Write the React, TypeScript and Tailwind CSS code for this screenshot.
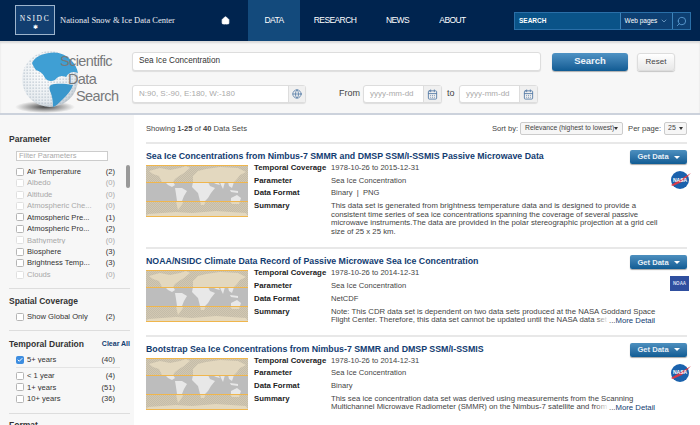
import { ChevronDown, Search, Home, Globe, CalendarDays, Check } from "lucide-react";

const paramFacets = [
  { label: "Air Temperature", count: 2 },
  { label: "Albedo", count: 0 },
  { label: "Altitude", count: 0 },
  { label: "Atmospheric Che...", count: 0 },
  { label: "Atmospheric Pre...", count: 1 },
  { label: "Atmospheric Pro...", count: 2 },
  { label: "Bathymetry", count: 0 },
  { label: "Biosphere", count: 3 },
  { label: "Brightness Temp...", count: 3 },
  { label: "Clouds", count: 0 },
];

const results = [
  {
    title: "Sea Ice Concentrations from Nimbus-7 SMMR and DMSP SSM/I-SSMIS Passive Microwave Data",
    coverage: "1978-10-26 to 2015-12-31",
    format: "Binary  |  PNG",
    summary: [
      "This data set is generated from brightness temperature data and is designed to provide a",
      "consistent time series of sea ice concentrations spanning the coverage of several passive",
      "microwave instruments.The data are provided in the polar stereographic projection at a grid cell",
      "size of 25 x 25 km.",
    ],
    logo: "nasa",
    more: false,
  },
  {
    title: "NOAA/NSIDC Climate Data Record of Passive Microwave Sea Ice Concentration",
    coverage: "1978-10-26 to 2014-12-31",
    format: "NetCDF",
    summary: [
      "Note: This CDR data set is dependent on two data sets produced at the NASA Goddard Space",
      "Flight Center. Therefore, this data set cannot be updated until the NASA data set",
    ],
    logo: "noaa",
    more: true,
  },
  {
    title: "Bootstrap Sea Ice Concentrations from Nimbus-7 SMMR and DMSP SSM/I-SSMIS",
    coverage: "1978-10-26 to 2014-12-31",
    format: "Binary",
    summary: [
      "This sea ice concentration data set was derived using measurements from the Scanning",
      "Multichannel Microwave Radiometer (SMMR) on the Nimbus-7 satellite and from",
    ],
    logo: "nasa",
    more: true,
  },
];

function WorldThumb({ id }: { id: string }) {
  return (
    <svg width="102" height="52" viewBox="0 0 102 52" className="shrink-0">
      <defs>
        <pattern id={id} width="2" height="2" patternUnits="userSpaceOnUse">
          <rect width="2" height="2" fill="#d2c8b2" />
          <rect width="1" height="1" fill="#c4bca9" />
          <rect x="1" y="1" width="1" height="1" fill="#c4bca9" />
        </pattern>
      </defs>
      <rect width="102" height="52" fill="#bdbdbd" />
      <rect width="102" height="17" fill={`url(#${id})`} />
      <rect y="36" width="102" height="16" fill={`url(#${id})`} />
      {/* land inside the tan bands */}
      <g fill="#e3d8bf">
        <path d="M3 6 L14 3 L24 5 L34 3 L40 1 L44 3 L38 8 L33 11 L29 14 L27 17 L16 17 L13 11 L7 9 Z" />
        <path d="M47 17 L47 11 L52 6 L60 4 L74 2 L92 3 L100 7 L94 10 L91 14 L88 17 Z" />
        <path d="M30 36 L38 36 L35 41 L32 45 L31 41 Z" />
        <path d="M54 36 L60 36 L58 40 L55 40 Z" />
        <path d="M84 36 L94 36 L93 39 L86 39 Z" />
        <path d="M2 49 L30 47 L46 48 L70 46 L100 48 L102 51 L0 51 Z" />
      </g>
      {/* land inside the grey band */}
      <g fill="#e8e8e8">
        <path d="M19 17 L27 17 L29 20 L26 22 L22 20 Z" />
        <path d="M29 23 L36 23 L41 26 L38 31 L36 36 L31 36 L30 29 Z" />
        <path d="M47 17 L62 17 L64 21 L69 23 L65 28 L62 33 L59 36 L54 36 L52 28 L49 25 L46 22 Z" />
        <path d="M66 17 L72 17 L74 20 L70 19 Z" />
        <path d="M74 17 L79 17 L77 24 L75 20 Z" />
        <path d="M82 17 L88 17 L86 23 L83 21 Z" />
        <path d="M84 25 L92 26 L92 28 L85 27 Z" />
        <path d="M85 33 L91 30 L95 33 L94 36 L85 36 Z" />
      </g>
      <rect y="0" width="102" height="1" fill="#f0b64c" />
      <rect y="17" width="102" height="1" fill="#f0b64c" />
      <rect y="36" width="102" height="1" fill="#f0b64c" />
      <rect y="51" width="102" height="1" fill="#f0b64c" />
    </svg>
  );
}

function NasaLogo() {
  return (
    <div className="relative flex h-[18px] w-[18px] items-center justify-center rounded-full bg-[#1a62ad]">
      <svg width="20" height="18" viewBox="0 0 20 18" className="absolute left-0 top-0">
        <path d="M0 14 L20 2 L11 11 L2 15 Z" fill="#d43b4a" />
      </svg>
      <span className="relative text-[5px] font-bold leading-none text-white">NASA</span>
    </div>
  );
}

function GlobeLogo() {
  return (
    <svg width="78" height="74" viewBox="0 0 78 74" className="absolute left-[11px] top-[4px]">
      <defs>
        <radialGradient id="gshade" cx="0.42" cy="0.38" r="0.7">
          <stop offset="0" stopColor="#ffffff" />
          <stop offset="0.75" stopColor="#e6ebef" />
          <stop offset="1" stopColor="#aab5bf" />
        </radialGradient>
        <pattern id="gbits" width="3" height="3" patternUnits="userSpaceOnUse">
          <rect x="0.5" y="0.5" width="1.3" height="1.3" fill="#aab7c3" />
        </pattern>
        <radialGradient id="gfloor" cx="0.5" cy="0.5" r="0.5">
          <stop offset="0" stopColor="#444" />
          <stop offset="1" stopColor="#555" stopOpacity="0" />
        </radialGradient>
      </defs>
      <ellipse cx="34" cy="62" rx="30" ry="6" fill="url(#gfloor)" />
      <circle cx="39" cy="34" r="28" fill="url(#gshade)" />
      <circle cx="39" cy="34" r="28" fill="url(#gbits)" opacity="0.75" />
      <path
        d="M21 18 C24 12 30 9 38 8 C46 6 54 9 60 15 C64 19 66 23 67 28 C62 26 58 27 55 32 C51 30 47 31 44 35 C40 37 36 36 34 33 C32 28 28 26 25 25 C23 23 22 20 21 18 Z"
        fill="#3f9fd4"
      />
      <path
        d="M40 40 C46 38 54 39 62 40 C60 46 56 50 52 54 C48 58 45 61 42 62 C42 56 41 50 39 46 C38 43 38 41 40 40 Z"
        fill="#3a97cc"
      />
    </svg>
  );
}

function Facet({ label, count, checked }: { label: string; count: number; checked?: boolean }) {
  const off = count === 0;
  return (
    <div className={`flex h-[11.45px] items-center pl-4 pr-[15px] text-[7.6px] leading-none ${off ? "text-[#a8a8a8]" : "text-[#333]"}`}>
      <span
        className={`mr-[3px] flex h-[8px] w-[8px] shrink-0 items-center justify-center rounded-[1.5px] border ${
          checked ? "border-[#3d8de0] bg-[#3d8de0]" : off ? "border-[#e0e0e0] bg-white" : "border-[#b5b5b5] bg-white"
        }`}
      >
        {checked && <Check className="h-[6px] w-[6px] text-white" strokeWidth={4} />}
      </span>
      <span className="flex-1 truncate">{label}</span>
      <span>({count})</span>
    </div>
  );
}

function Sidebar() {
  return (
    <aside className="relative w-[134px] shrink-0 overflow-hidden bg-[#f7f7f7] pr-[4px] pt-[19px]">
      <div className="absolute left-[126px] top-[50px] h-[23px] w-[4px] rounded-sm bg-[#999]" />
      <h3 className="mb-[7px] pl-[9px] text-[8.5px] font-bold leading-[10px] text-[#333]">Parameter</h3>
      <div className="mb-[5px] ml-4 flex h-[10px] w-[92px] items-center border border-[#ccc] bg-white px-[2px] text-[7.5px] leading-none text-[#aaa]">
        Filter Parameters
      </div>
      {paramFacets.map((f) => (
        <Facet key={f.label} label={f.label} count={f.count} />
      ))}
      <div className="ml-[9px] mt-[8px] border-t border-[#ddd]" />
      <h3 className="mb-[5px] mt-[7px] pl-[9px] text-[8.5px] font-bold leading-[10px] text-[#333]">Spatial Coverage</h3>
      <Facet label="Show Global Only" count={2} />
      <div className="ml-[9px] mt-[7px] border-t border-[#ddd]" />
      <div className="mb-[5px] mt-[8px] flex items-center justify-between pl-[9px]">
        <h3 className="text-[8.5px] font-bold leading-[10px] text-[#333]">Temporal Duration</h3>
        <span className="text-[7px] font-bold leading-none text-[#123c71]">Clear All</span>
      </div>
      <Facet label="5+ years" count={40} checked />
      <div className="mb-[2px] ml-4 mr-[10px] mt-[2px] border-t border-[#e4e4e4]" />
      <Facet label="< 1 year" count={4} />
      <Facet label="1+ years" count={51} />
      <Facet label="10+ years" count={36} />
      <div className="ml-[9px] mt-[8px] border-t border-[#ddd]" />
      <h3 className="mt-[6px] pl-[9px] text-[8.5px] font-bold leading-[10px] text-[#333]">Format</h3>
    </aside>
  );
}

function ResultRow({ label, children }: { label: string; children: React.ReactNode }) {
  return (
    <div className="flex">
      <span className="w-[77px] shrink-0 text-[7.8px] font-bold text-[#222]">{label}</span>
      <div className="flex-1 text-[#444]">{children}</div>
    </div>
  );
}

function Result({ r, idx }: { r: (typeof results)[number]; idx: number }) {
  return (
    <section className={`relative border-b-2 border-[#e8e8e8] pt-[6px] last:border-b-0 ${r.more ? "pb-[10px]" : "pb-[11px]"}`}>
      <div className="flex h-[15px] items-start justify-between">
        <h2 className="mt-[1px] text-[8.8px] font-bold leading-[11px] text-[#123c71]">{r.title}</h2>
        <button className="flex h-[14px] w-[57px] items-center justify-center gap-[5px] rounded-[2px] bg-gradient-to-b from-[#4d90bf] to-[#0f5c94] text-[7.6px] font-bold leading-none text-[#e6eff6] shadow-[0_1px_1px_rgba(0,0,0,0.35)]">
          Get Data
          <span className="h-0 w-0 border-x-[3px] border-t-[3px] border-x-transparent border-t-white" />
        </button>
      </div>
      <div className="flex gap-[6px]">
        <WorldThumb id={`hatch${idx}`} />
        <div className="-mt-[3px] flex-1 text-[7.6px] leading-[12.7px]">
          <ResultRow label="Temporal Coverage">{r.coverage}</ResultRow>
          <ResultRow label="Parameter">Sea Ice Concentration</ResultRow>
          <ResultRow label="Data Format">
            <span className="whitespace-pre">{r.format}</span>
          </ResultRow>
          <ResultRow label="Summary">
            <div className="mt-[2px] text-[7.75px] leading-[8.6px]">
              {r.summary.map((line) => (
                <div key={line} className="whitespace-nowrap">
                  {line}
                </div>
              ))}
            </div>
          </ResultRow>
        </div>
      </div>
      <div className="absolute -right-[2px] top-[27px]">
        {r.logo === "nasa" ? (
          <NasaLogo />
        ) : (
          <div className="flex h-[15px] w-[19px] items-center justify-center bg-[#2f4f9f] text-[4.5px] font-bold text-[#d5dcf0]">NOAA</div>
        )}
      </div>
      {r.more && (
        <>
          <div className="absolute bottom-[10px] right-[78px] h-[9px] w-[14px] bg-gradient-to-r from-transparent to-white" />
          <div className="absolute bottom-[10px] right-[32px] w-[46px] whitespace-nowrap text-[7.75px] leading-[9px] text-[#444]">
            ...<span className="text-[#123c71]">More Detail</span>
          </div>
        </>
      )}
    </section>
  );
}

function DateField() {
  return (
    <div className="flex h-[18px] w-[79px] items-center rounded-[3px] border border-[#ddd] bg-white shadow-[0_1px_1px_rgba(0,0,0,0.1)]">
      <span className="flex-1 pl-[6px] text-[8px] text-[#aaa]">yyyy-mm-dd</span>
      <span className="flex h-full w-[18px] items-center justify-center border-l border-[#ddd] bg-[#f0f0f0]">
        <CalendarDays className="h-[11px] w-[11px] text-[#5a7fa8]" />
      </span>
    </div>
  );
}

export default function App() {
  return (
    <div className="flex h-[425px] w-[700px] flex-col overflow-hidden bg-white font-['Liberation_Sans',Arial,sans-serif]">
      <header className="flex h-[41px] shrink-0 items-stretch bg-[#00244f] pl-[15px]">
        <div className="relative mt-[5px] flex h-[30px] w-[40px] flex-col items-center justify-center border border-[#9db4cc] bg-[#123e70] text-white">
          <span className="mt-[5px] font-['Liberation_Serif',serif] text-[7.5px] leading-none tracking-[1.6px]">NSIDC</span>
          <span className="mt-[2px] text-[6px] leading-none">✱</span>
        </div>
        <div className="ml-[5px] flex w-[161px] items-center font-['Liberation_Serif',serif] text-[8.5px] text-[#e8edf3]">
          National Snow &amp; Ice Data Center
        </div>
        <div className="flex items-center">
          <Home className="h-[9px] w-[9px] fill-white text-white" />
        </div>
        <nav className="ml-[18px] flex text-[8.5px] tracking-[-0.6px] text-white">
          <a className="flex w-[52px] items-center justify-center bg-[#134a7c]">DATA</a>
          <a className="flex w-[70px] items-center justify-center">RESEARCH</a>
          <a className="flex w-[55px] items-center justify-center">NEWS</a>
          <a className="flex w-[55px] items-center justify-center">ABOUT</a>
        </nav>
        <div className="ml-[34px] mt-[12px] flex h-[18px] w-[177px] border border-[#2a6fa8] bg-[#0a5388] text-white">
          <div className="flex flex-1 items-center pl-1 text-[6.5px] font-bold">SEARCH</div>
          <div className="flex w-[52px] items-center justify-center gap-[3px] border-l border-[#3d84bb] bg-[#0d3f72] text-[6.5px]">
            Web pages <ChevronDown className="h-[8px] w-[8px] text-[#8fbbe0]" />
          </div>
          <div className="flex w-[18px] items-center justify-center border-l border-[#3d84bb] bg-[#0d3f72]">
            <Search className="h-[11px] w-[11px] -scale-x-100 text-[#5b9ad0]" />
          </div>
        </div>
      </header>

      <div className="relative flex h-[74px] shrink-0 flex-col border-b-2 border-[#ccd2dc] bg-[#f7f7f7] pl-[132px] pt-[11px] shadow-[inset_0_2px_2px_rgba(0,0,0,0.12)]">
        <GlobeLogo />
        <div className="absolute left-[60px] top-[12px] text-[14.5px] leading-[16px] tracking-[-0.6px] text-[#77797b]">Scientific</div>
        <div className="absolute left-[68px] top-[30px] text-[14.5px] leading-[16px] tracking-[-0.6px] text-[#77797b]">Data</div>
        <div className="absolute left-[76px] top-[47px] text-[14.5px] leading-[16px] tracking-[-0.6px] text-[#77797b]">Search</div>

        <div className="flex items-center">
          <div className="flex h-[19px] w-[409px] items-center rounded-[3px] border border-[#ddd] bg-white pl-[6px] text-[8.2px] text-[#333] shadow-[0_1px_1px_rgba(0,0,0,0.1)]">
            Sea Ice Concentration
          </div>
          <button className="ml-[11px] h-[18px] w-[76px] rounded-[3px] bg-gradient-to-b from-[#4f93c4] to-[#0f5b93] text-[9.5px] font-bold text-[#eef4f9] shadow-[0_1px_1px_rgba(0,0,0,0.3)]">
            Search
          </button>
          <button className="ml-[9px] h-[18px] w-[38px] rounded-[3px] border border-[#ddd] bg-gradient-to-b from-white to-[#e8e8e8] text-[8px] text-[#444] shadow-[0_1px_1px_rgba(0,0,0,0.2)]">
            Reset
          </button>
        </div>

        <div className="mt-[14px] flex items-center text-[9px] text-[#444]">
          <div className="flex h-[18px] w-[174px] items-center rounded-[3px] border border-[#ddd] bg-white shadow-[0_1px_1px_rgba(0,0,0,0.1)]">
            <span className="flex-1 pl-[6px] text-[8px] text-[#aaa]">N:90, S:-90, E:180, W:-180</span>
            <span className="flex h-full w-[17px] items-center justify-center border-l border-[#ddd] bg-[#f0f0f0]">
              <Globe className="h-[10px] w-[10px] text-[#5a7fa8]" />
            </span>
          </div>
          <span className="ml-[33px] w-[24px]">From</span>
          <DateField />
          <span className="ml-[5px] w-[12px]">to</span>
          <DateField />
        </div>
      </div>

      <div className="flex min-h-0 flex-1">
        <Sidebar />
        <main className="flex-1 pl-[12px] pr-[13px]">
          <div className="flex h-[29px] items-center justify-between border-b-2 border-[#e8e8e8] text-[7.6px] text-[#444]">
            <span>
              Showing <b>1-25</b> of <b>40</b> Data Sets
            </span>
            <div className="flex items-center">
              <span className="whitespace-nowrap">Sort by:</span>
              <span className="ml-[2px] flex h-[13px] w-[103px] items-center justify-between whitespace-nowrap rounded-[2px] border border-[#ccc] bg-[#f6f6f6] px-1 text-[6.8px]">
                Relevance (highest to lowest)
                <span className="h-0 w-0 border-x-[2.5px] border-t-[3px] border-x-transparent border-t-[#333]" />
              </span>
              <span className="ml-[5px] whitespace-nowrap">Per page:</span>
              <span className="ml-[3px] flex h-[13px] w-[23px] items-center justify-between rounded-[2px] border border-[#ccc] bg-[#f6f6f6] px-[3px] text-[7px]">
                25
                <span className="h-0 w-0 border-x-[2.5px] border-t-[3px] border-x-transparent border-t-[#333]" />
              </span>
            </div>
          </div>
          {results.map((r, i) => (
            <Result key={r.title} r={r} idx={i} />
          ))}
        </main>
      </div>
    </div>
  );
}
